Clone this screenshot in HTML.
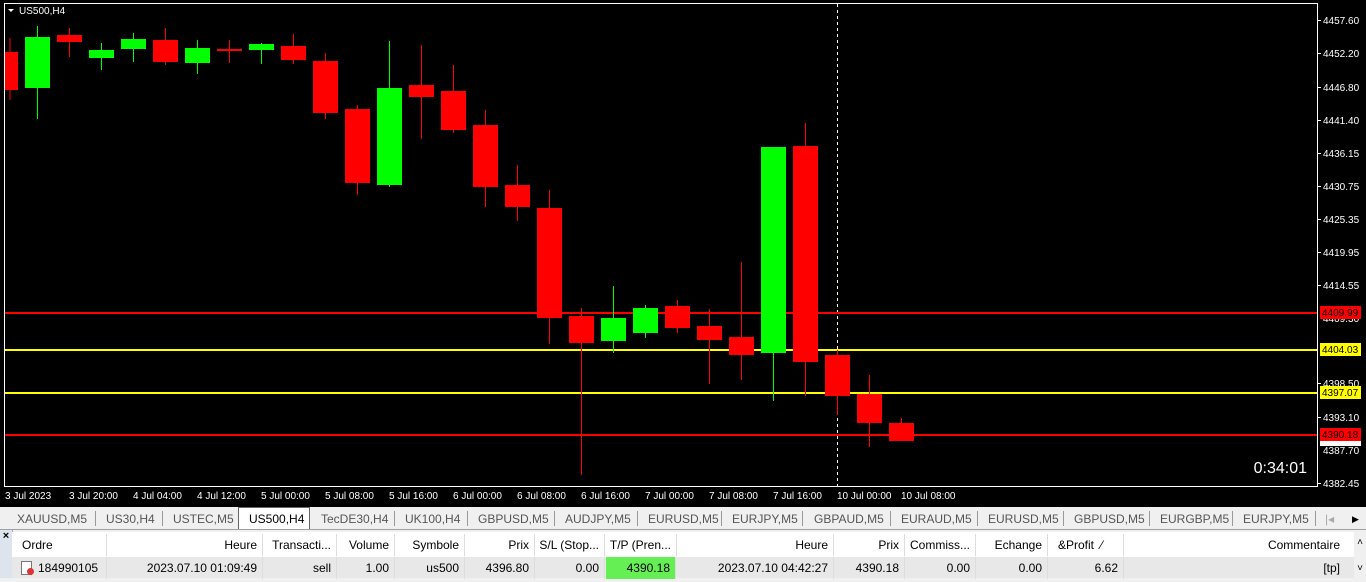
<!DOCTYPE html>
<html><head><meta charset="utf-8"><style>
body{margin:0;width:1366px;height:578px;overflow:hidden;background:#f0f0f0;font-family:"Liberation Sans",sans-serif;}
#chart{position:absolute;left:0;top:0;width:1366px;height:507px;background:#000;}
#tabs{position:absolute;left:0;top:507px;width:1366px;height:22px;background:#f0f0f0;border-bottom:1px solid #a0a0a0;font-size:12px;color:#555;}
.tab{position:absolute;top:3px;height:18px;line-height:18px;}
.sep{position:absolute;top:4px;width:1px;height:15px;background:#999;}
#tbl{position:absolute;left:0;top:530px;width:1366px;height:48px;font-size:12px;color:#000;}
.c{position:absolute;height:22px;line-height:22px;text-align:right;padding-right:5px;box-sizing:border-box;border-right:1px solid #ddd;white-space:nowrap;overflow:hidden;}
</style></head><body>
<div id="chart">
<svg width="1366" height="507" xmlns="http://www.w3.org/2000/svg" font-family="Liberation Sans, sans-serif">
<rect x="4.5" y="3.5" width="1313" height="483" fill="none" stroke="#fff" stroke-width="1"/>
<line x1="837.5" y1="4" x2="837.5" y2="486" stroke="#fff" stroke-dasharray="3,3"/>
<line x1="10" y1="38" x2="10" y2="100" stroke="#f00"/>
<rect x="5" y="52" width="13" height="38" fill="#f00"/>
<rect x="5" y="312" width="1312" height="2" fill="#f00"/>
<rect x="5" y="349" width="1312" height="2" fill="#ff0"/>
<rect x="5" y="392" width="1312" height="2" fill="#ff0"/>
<rect x="5" y="434" width="1312" height="2" fill="#f00"/>
<polygon points="8,9 14,9 11,12" fill="#fff"/>
<text x="19" y="14" fill="#fff" font-size="10">US500,H4</text>
<text x="1307" y="473" fill="#fff" font-size="16" text-anchor="end">0:34:01</text>
<g fill="#fff" font-size="10">
<text x="1323" y="24">4457.60</text><text x="1323" y="57">4452.20</text><text x="1323" y="91">4446.80</text>
<text x="1323" y="124">4441.40</text><text x="1323" y="157">4436.15</text><text x="1323" y="190">4430.75</text>
<text x="1323" y="223">4425.35</text><text x="1323" y="256">4419.95</text><text x="1323" y="289">4414.55</text>
<text x="1323" y="322">4409.30</text><text x="1323" y="387">4398.50</text><text x="1323" y="421">4393.10</text>
<text x="1323" y="454">4387.70</text><text x="1323" y="487">4382.45</text>
<rect x="1320" y="439" width="41" height="7" fill="#fff"/>
<rect x="1320" y="306" width="41" height="13" fill="#f00"/><text x="1322" y="316" fill="#000">4409.99</text>
<rect x="1320" y="343" width="41" height="13" fill="#ff0"/><text x="1322" y="353" fill="#000">4404.03</text>
<rect x="1320" y="386" width="41" height="13" fill="#ff0"/><text x="1322" y="396" fill="#000">4397.07</text>
<rect x="1320" y="428" width="41" height="13" fill="#f00"/><text x="1322" y="438" fill="#000">4390.18</text>
</g>
<g fill="#fff" font-size="10">
<text x="5" y="499">3 Jul 2023</text><text x="69" y="499">3 Jul 20:00</text><text x="133" y="499">4 Jul 04:00</text>
<text x="197" y="499">4 Jul 12:00</text><text x="261" y="499">5 Jul 00:00</text><text x="325" y="499">5 Jul 08:00</text>
<text x="389" y="499">5 Jul 16:00</text><text x="453" y="499">6 Jul 00:00</text><text x="517" y="499">6 Jul 08:00</text>
<text x="581" y="499">6 Jul 16:00</text><text x="645" y="499">7 Jul 00:00</text><text x="709" y="499">7 Jul 08:00</text>
<text x="773" y="499">7 Jul 16:00</text><text x="837" y="499">10 Jul 00:00</text><text x="901" y="499">10 Jul 08:00</text>
</g>
<g fill="#fff">
<rect x="1318" y="20" width="3" height="1"/><rect x="1318" y="53" width="3" height="1"/><rect x="1318" y="87" width="3" height="1"/>
<rect x="1318" y="120" width="3" height="1"/><rect x="1318" y="153" width="3" height="1"/><rect x="1318" y="186" width="3" height="1"/>
<rect x="1318" y="219" width="3" height="1"/><rect x="1318" y="252" width="3" height="1"/><rect x="1318" y="285" width="3" height="1"/>
<rect x="1318" y="383" width="3" height="1"/><rect x="1318" y="417" width="3" height="1"/><rect x="1318" y="483" width="3" height="1"/>
</g>
<g>
<line x1="37.5" y1="26" x2="37.5" y2="119" stroke="#0f0"/><rect x="25" y="37" width="25" height="51" fill="#0f0"/>
<line x1="69.5" y1="28" x2="69.5" y2="57" stroke="#f00"/><rect x="57" y="35" width="25" height="7" fill="#f00"/>
<line x1="101.5" y1="43" x2="101.5" y2="70" stroke="#0f0"/><rect x="89" y="50" width="25" height="8" fill="#0f0"/>
<line x1="133.5" y1="33" x2="133.5" y2="62" stroke="#0f0"/><rect x="121" y="39" width="25" height="10" fill="#0f0"/>
<line x1="165.5" y1="28" x2="165.5" y2="65" stroke="#f00"/><rect x="153" y="40" width="25" height="22" fill="#f00"/>
<line x1="197.5" y1="40" x2="197.5" y2="74" stroke="#0f0"/><rect x="185" y="48" width="25" height="15" fill="#0f0"/>
<line x1="229.5" y1="40" x2="229.5" y2="63" stroke="#f00"/><rect x="217" y="49" width="25" height="2" fill="#f00"/>
<line x1="261.5" y1="43" x2="261.5" y2="64" stroke="#0f0"/><rect x="249" y="44" width="25" height="6" fill="#0f0"/>
<line x1="293.5" y1="34" x2="293.5" y2="64" stroke="#f00"/><rect x="281" y="46" width="25" height="14" fill="#f00"/>
<line x1="325.5" y1="53" x2="325.5" y2="119" stroke="#f00"/><rect x="313" y="61" width="25" height="52" fill="#f00"/>
<line x1="357.5" y1="105" x2="357.5" y2="195" stroke="#f00"/><rect x="345" y="109" width="25" height="74" fill="#f00"/>
<line x1="389.5" y1="41" x2="389.5" y2="187" stroke="#0f0"/><rect x="377" y="88" width="25" height="97" fill="#0f0"/>
<line x1="421.5" y1="45" x2="421.5" y2="139" stroke="#f00"/><rect x="409" y="85" width="25" height="12" fill="#f00"/>
<line x1="453.5" y1="65" x2="453.5" y2="133" stroke="#f00"/><rect x="441" y="91" width="25" height="39" fill="#f00"/>
<line x1="485.5" y1="110" x2="485.5" y2="207" stroke="#f00"/><rect x="473" y="125" width="25" height="62" fill="#f00"/>
<line x1="517.5" y1="165" x2="517.5" y2="221" stroke="#f00"/><rect x="505" y="185" width="25" height="22" fill="#f00"/>
<line x1="549.5" y1="190" x2="549.5" y2="344" stroke="#f00"/><rect x="537" y="208" width="25" height="110" fill="#f00"/>
<line x1="581.5" y1="308" x2="581.5" y2="475" stroke="#f00"/><rect x="569" y="316" width="25" height="27" fill="#f00"/>
<line x1="613.5" y1="286" x2="613.5" y2="353" stroke="#0f0"/><rect x="601" y="318" width="25" height="23" fill="#0f0"/>
<line x1="645.5" y1="305" x2="645.5" y2="338" stroke="#0f0"/><rect x="633" y="308" width="25" height="25" fill="#0f0"/>
<line x1="677.5" y1="300" x2="677.5" y2="333" stroke="#f00"/><rect x="665" y="306" width="25" height="22" fill="#f00"/>
<line x1="709.5" y1="309" x2="709.5" y2="384" stroke="#f00"/><rect x="697" y="326" width="25" height="14" fill="#f00"/>
<line x1="741.5" y1="262" x2="741.5" y2="380" stroke="#f00"/><rect x="729" y="337" width="25" height="18" fill="#f00"/>
<line x1="773.5" y1="147" x2="773.5" y2="401" stroke="#0f0"/><rect x="761" y="147" width="25" height="206" fill="#0f0"/>
<line x1="805.5" y1="123" x2="805.5" y2="396" stroke="#f00"/><rect x="793" y="146" width="25" height="216" fill="#f00"/>
<line x1="837.5" y1="350" x2="837.5" y2="415" stroke="#f00"/><rect x="825" y="355" width="25" height="41" fill="#f00"/>
<line x1="869.5" y1="375" x2="869.5" y2="447" stroke="#f00"/><rect x="857" y="394" width="25" height="29" fill="#f00"/>
<line x1="901.5" y1="418" x2="901.5" y2="441" stroke="#f00"/><rect x="889" y="423" width="25" height="18" fill="#f00"/>
</g>
</svg>
</div>
<div id="tabs">
<div class="tab" style="left:17px">XAUUSD,M5</div><div class="sep" style="left:95px"></div>
<div class="tab" style="left:106px">US30,H4</div><div class="sep" style="left:162px"></div>
<div class="tab" style="left:173px">USTEC,M5</div>
<div style="position:absolute;left:238px;top:0;width:72px;height:22px;background:#fff;border:1px solid #666;border-bottom:none;box-sizing:border-box"></div>
<div class="tab" style="left:249px;color:#000">US500,H4</div>
<div class="tab" style="left:321px">TecDE30,H4</div><div class="sep" style="left:394px"></div>
<div class="tab" style="left:405px">UK100,H4</div><div class="sep" style="left:467px"></div>
<div class="tab" style="left:478px">GBPUSD,M5</div><div class="sep" style="left:554px"></div>
<div class="tab" style="left:565px">AUDJPY,M5</div><div class="sep" style="left:637px"></div>
<div class="tab" style="left:648px">EURUSD,M5</div><div class="sep" style="left:721px"></div>
<div class="tab" style="left:732px">EURJPY,M5</div><div class="sep" style="left:802px"></div>
<div class="tab" style="left:814px">GBPAUD,M5</div><div class="sep" style="left:890px"></div>
<div class="tab" style="left:901px">EURAUD,M5</div><div class="sep" style="left:977px"></div>
<div class="tab" style="left:988px">EURUSD,M5</div><div class="sep" style="left:1063px"></div>
<div class="tab" style="left:1074px">GBPUSD,M5</div><div class="sep" style="left:1149px"></div>
<div class="tab" style="left:1160px">EURGBP,M5</div><div class="sep" style="left:1232px"></div>
<div class="tab" style="left:1243px">EURJPY,M5</div><div class="sep" style="left:1315px"></div>
<div class="tab" style="left:1325px;color:#aaa">|◂</div><div class="tab" style="left:1352px;color:#000;font-size:9px">▶</div>
</div>
<div id="tbl">
<div style="position:absolute;left:0;top:0;width:12px;height:48px;background:#dde4ee;border-right:1px solid #aaa"><div style="font-size:11px;font-weight:bold;text-align:center">×</div></div>
<div style="position:absolute;left:12px;top:2px;width:1342px;height:25px;background:#fff;border-bottom:1px solid #ccc"></div>
<div style="position:absolute;left:12px;top:27px;width:1342px;height:21px;background:#e8e8e8"></div>
<div style="position:absolute;left:1354px;top:0;width:12px;height:48px;background:#f0f0f0;font-size:10px;text-align:center;line-height:26px">˄<br>˅</div>
<div style="position:absolute;left:12px;top:4px;height:22px;width:1342px">
<div class="c" style="left:0;width:95px;text-align:left;padding-left:10px">Ordre</div>
<div class="c" style="left:95px;width:156px">Heure</div>
<div class="c" style="left:251px;width:74px">Transacti...</div>
<div class="c" style="left:325px;width:58px">Volume</div>
<div class="c" style="left:383px;width:70px">Symbole</div>
<div class="c" style="left:453px;width:70px">Prix</div>
<div class="c" style="left:523px;width:70px">S/L (Stop...</div>
<div class="c" style="left:593px;width:72px">T/P (Pren...</div>
<div class="c" style="left:665px;width:157px">Heure</div>
<div class="c" style="left:822px;width:71px">Prix</div>
<div class="c" style="left:893px;width:71px">Commiss...</div>
<div class="c" style="left:964px;width:72px">Echange</div>
<div class="c" style="left:1036px;width:76px;text-align:left;padding-left:10px">&amp;Profit &nbsp;⁄</div>
<div class="c" style="left:1112px;width:221px;border:none">Commentaire</div>
</div>
<div style="position:absolute;left:12px;top:27px;height:21px;width:1342px">
<div class="c" style="left:0;width:95px;text-align:left;padding-left:26px">184990105</div>
<div style="position:absolute;left:9px;top:4px;width:9px;height:12px;border:1px solid #777;background:#fff"></div><div style="position:absolute;left:15px;top:11px;width:7px;height:7px;border-radius:50%;background:#d33"></div>
<div class="c" style="left:95px;width:156px">2023.07.10 01:09:49</div>
<div class="c" style="left:251px;width:74px">sell</div>
<div class="c" style="left:325px;width:58px">1.00</div>
<div class="c" style="left:383px;width:70px">us500</div>
<div class="c" style="left:453px;width:70px">4396.80</div>
<div class="c" style="left:523px;width:70px">0.00</div>
<div class="c" style="left:594px;width:70px;background:#66ee55">4390.18</div>
<div class="c" style="left:665px;width:157px">2023.07.10 04:42:27</div>
<div class="c" style="left:822px;width:71px">4390.18</div>
<div class="c" style="left:893px;width:71px">0.00</div>
<div class="c" style="left:964px;width:72px">0.00</div>
<div class="c" style="left:1036px;width:76px">6.62</div>
<div class="c" style="left:1112px;width:221px;border:none">[tp]</div>
</div>
</div>
</body></html>
